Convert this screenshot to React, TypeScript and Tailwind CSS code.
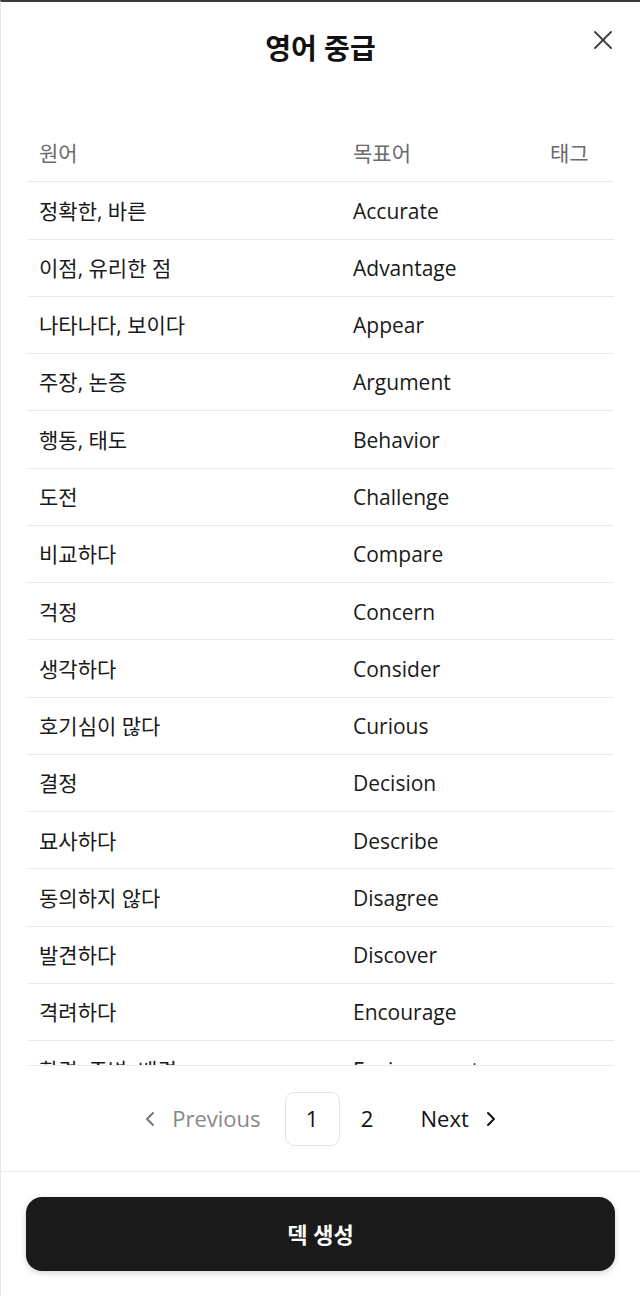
import React from "react";
import { X, ChevronLeft, ChevronRight } from "lucide-react";

interface WordRow {
    source: string;
    target: string;
    tag?: string;
}

const words: WordRow[] = [
    { source: "정확한, 바른", target: "Accurate" },
    { source: "이점, 유리한 점", target: "Advantage" },
    { source: "나타나다, 보이다", target: "Appear" },
    { source: "주장, 논증", target: "Argument" },
    { source: "행동, 태도", target: "Behavior" },
    { source: "도전", target: "Challenge" },
    { source: "비교하다", target: "Compare" },
    { source: "걱정", target: "Concern" },
    { source: "생각하다", target: "Consider" },
    { source: "호기심이 많다", target: "Curious" },
    { source: "결정", target: "Decision" },
    { source: "묘사하다", target: "Describe" },
    { source: "동의하지 않다", target: "Disagree" },
    { source: "발견하다", target: "Discover" },
    { source: "격려하다", target: "Encourage" },
    { source: "환경, 주변, 배경", target: "Environment" },
];

const font = "font-['Open_Sans','Noto_Sans_CJK_KR',sans-serif]";

const App: React.FC = () => {
    return (
        <div className={`w-[640px] h-[1296px] bg-white border-t-2 border-t-[#3a3a3a] border-l border-l-[#e6e6e6] flex flex-col ${font}`}>
            {/* header */}
            <div className="relative h-[123px] shrink-0">
                <h1 className="pt-[24px] text-center text-[28px] leading-[44px] font-bold text-[#111]">
                    영어 중급
                </h1>
                <button className="absolute right-[21px] top-[22px] text-[#444]">
                    <X size={32} strokeWidth={1.5} />
                </button>
            </div>

            {/* table */}
            <div className="mx-[26px] h-[941px] shrink-0 overflow-hidden border-b border-[#ececec]">
                <div className="grid grid-cols-[314px_197px_1fr] h-[57.27px] pt-[2px] border-b border-[#e8e8e8] items-center text-[21px] text-[#6b6b6b]">
                    <div className="px-3">원어</div>
                    <div className="px-3">목표어</div>
                    <div className="px-3">태그</div>
                </div>
                {words.map((w) => (
                    <div
                        key={w.target}
                        className="grid grid-cols-[314px_197px_1fr] h-[57.27px] pt-[2px] border-b border-[#e8e8e8] items-center text-[21px] text-[#1a1a1a]"
                    >
                        <div className="px-3">{w.source}</div>
                        <div className="px-3">{w.target}</div>
                        <div className="px-3">{w.tag}</div>
                    </div>
                ))}
            </div>

            {/* pagination */}
            <div className="h-[105px] shrink-0 flex items-center justify-center text-[22px]">
                <button className="flex items-center gap-[10px] text-[#888] mr-[24px]">
                    <ChevronLeft size={24} strokeWidth={2} className="text-[#777]" />
                    Previous
                </button>
                <button className="w-[55px] h-[54px] rounded-[9px] border border-[#e6e6e6] text-[#111]">
                    1
                </button>
                <button className="w-[55px] h-[54px] text-[#111]">2</button>
                <button className="flex items-center gap-[10px] text-[#111] ml-[26px]">
                    Next
                    <ChevronRight size={24} strokeWidth={2} />
                </button>
            </div>

            {/* footer */}
            <div className="flex-1 border-t border-[#e8e8e8] px-[25px] pt-[25px]">
                <button className="w-full h-[74px] rounded-[16px] bg-[#1a1a1a] text-white text-[22px] font-bold shadow-[0_2px_6px_rgba(0,0,0,0.18)]">
                    덱 생성
                </button>
            </div>
        </div>
    );
};

export default App;
